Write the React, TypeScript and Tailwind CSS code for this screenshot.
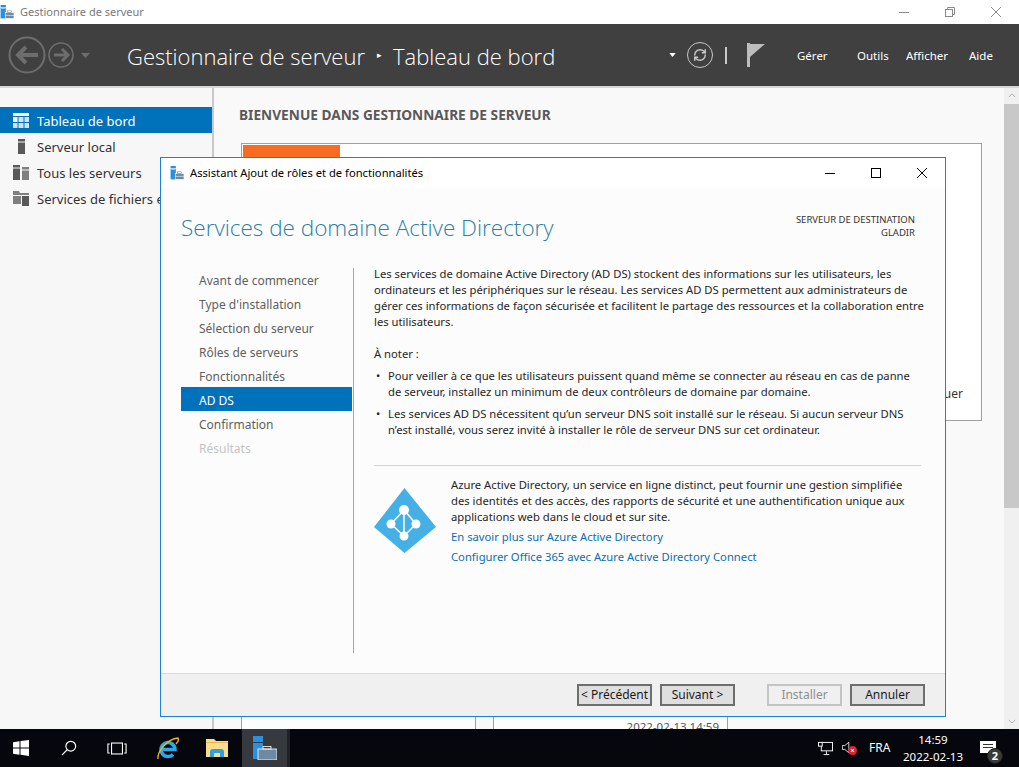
import React from 'react';
import { RefreshCw } from 'lucide-react';

const ServerIcon: React.FC<{ className?: string }> = ({ className }) => (
  <svg viewBox="0 0 24 24" className={className}>
    <rect x="1" y="0" width="9" height="4" fill="#2b8fe0" />
    <rect x="1" y="5" width="9" height="18" fill="#2b8fe0" />
    <rect x="2" y="5" width="7" height="1" fill="#ffffff" />
    <rect x="9" y="13" width="15" height="10" fill="#6e8aa3" stroke="#ffffff" strokeWidth="1" />
    <rect x="13" y="10" width="7" height="3" fill="none" stroke="#6e8aa3" strokeWidth="1" />
    <rect x="9" y="17" width="15" height="1" fill="#ffffff" />
  </svg>
);

const steps = [
  { label: 'Avant de commencer', state: 'normal' },
  { label: "Type d'installation", state: 'normal' },
  { label: 'Sélection du serveur', state: 'normal' },
  { label: 'Rôles de serveurs', state: 'normal' },
  { label: 'Fonctionnalités', state: 'normal' },
  { label: 'AD DS', state: 'active' },
  { label: 'Confirmation', state: 'normal' },
  { label: 'Résultats', state: 'disabled' },
];

const NavIcon: React.FC<{ kind: string; active?: boolean }> = ({ kind, active }) => {
  const c = active ? '#ffffff' : '#595959';
  if (kind === 'dash') {
    return (
      <svg viewBox="0 0 16 15" className="w-4 h-[15px] shrink-0">
        <rect width="16" height="3" fill={c} />
        <rect y="4" width="4.5" height="5" fill={c} />
        <rect x="5.5" y="4" width="5" height="5" fill="#cfe3f3" />
        <rect x="11.5" y="4" width="4.5" height="5" fill="#cfe3f3" />
        <rect y="10" width="4.5" height="5" fill="#cfe3f3" />
        <rect x="5.5" y="10" width="5" height="5" fill="#cfe3f3" />
        <rect x="11.5" y="10" width="4.5" height="5" fill="#cfe3f3" />
      </svg>
    );
  }
  if (kind === 'local') {
    return (
      <svg viewBox="0 0 16 15" className="w-4 h-[15px] shrink-0">
        <rect x="5" y="0" width="7" height="2.5" fill={c} />
        <rect x="5" y="3.5" width="7" height="11.500" fill={c} />
      </svg>
    );
  }
  if (kind === 'all') {
    return (
      <svg viewBox="0 0 16 15" className="w-4 h-[15px] shrink-0">
        <rect x="0" y="0" width="7" height="2.5" fill={c} />
        <rect x="0" y="3.5" width="7" height="11.500" fill={c} />
        <rect x="9" y="2" width="7" height="2.5" fill="#808080" />
        <rect x="9" y="5.5" width="7" height="9.500" fill="#808080" />
      </svg>
    );
  }
  return (
    <svg viewBox="0 0 16 15" className="w-4 h-[15px] shrink-0">
      <path d="M0 0h6l1 2h9v2H0z" fill="#808080" />
      <rect y="5" width="8" height="8" fill="#808080" />
      <rect x="9" y="5" width="7" height="10" fill={c} />
    </svg>
  );
};

const navItems = [
  { kind: 'dash', label: 'Tableau de bord', active: true },
  { kind: 'local', label: 'Serveur local' },
  { kind: 'all', label: 'Tous les serveurs' },
  { kind: 'files', label: 'Services de fichiers et' },
];

const CloseGlyph: React.FC<{ className?: string }> = ({ className }) => (
  <svg viewBox="0 0 10 10" className={`w-[10px] h-[10px] ${className ?? ''}`} fill="none" stroke="currentColor" strokeWidth="1">
    <path d="M0 0L10 10M10 0L0 10" />
  </svg>
);

const WizardButton: React.FC<{ label: string; disabled?: boolean; className?: string }> = ({ label, disabled, className }) => (
  <div
    className={`h-[22px] w-[75px] flex items-center justify-center text-[12px] border-2 ${
      disabled ? 'border-[#c4c4c4] bg-[#f0f0f0] text-[#8f8f8f]' : 'border-[#6e6e6e] bg-[#dfdfdf] text-[#1a1a1a]'
    } ${className ?? ''}`}
  >
    {label}
  </div>
);

const Wizard: React.FC = () => (
  <div className="absolute left-[160px] top-[157px] w-[786px] h-[560px] border border-[#1883d7] bg-[#fcfcfc] flex flex-col text-[#1f1f1f]">
    <div className="h-[30px] shrink-0 bg-white flex items-center pl-[9px]">
      <ServerIcon className="w-[14px] h-[14px]" />
      <span className="ml-[6px] text-[11.2px] text-black">Assistant Ajout de rôles et de fonctionnalités</span>
      <div className="ml-auto flex items-center text-black">
        <div className="w-[46px] flex justify-center"><div className="w-[10px] h-px bg-black" /></div>
        <div className="w-[46px] flex justify-center"><div className="w-[10px] h-[10px] border border-black" /></div>
        <div className="w-[46px] flex justify-center"><CloseGlyph /></div>
      </div>
    </div>

    <div className="h-[76px] shrink-0 flex pl-[20px] pr-[30px]">
      <h1 className="mt-[22px] text-[22.5px] leading-[36px] font-light text-[#2a7fa8] font-['Open_Sans',sans-serif]">Services de domaine Active Directory</h1>
      <div className="ml-auto mt-[25px] text-right text-[9.5px] leading-[13px] text-[#333333]">
        <div>SERVEUR DE DESTINATION</div>
        <div>GLADIR</div>
      </div>
    </div>

    <div className="flex-1 flex min-h-0">
      <div className="w-[171px] ml-[20px] mr-px mt-[3px] shrink-0 text-[12px]">
        {steps.map((s) => (
          <div
            key={s.label}
            className={`h-[24px] flex items-center pl-[18px] pt-[4px] ${
              s.state === 'active' ? 'bg-[#0072bc] text-white' : s.state === 'disabled' ? 'text-[#c4c4c4]' : 'text-[#5f5f5f]'
            }`}
          >
            {s.label}
          </div>
        ))}
      </div>

      <div className="mt-[4px] mb-[20px] border-l border-[#a6a6a6] pl-[20px] w-[574px] text-[11.25px] leading-[16px] text-[#262626]">
        <p className="mt-[-2px] whitespace-nowrap">
          Les services de domaine Active Directory (AD DS) stockent des informations sur les utilisateurs, les<br />
          ordinateurs et les périphériques sur le réseau. Les services AD DS permettent aux administrateurs de<br />
          gérer ces informations de façon sécurisée et facilitent le partage des ressources et la collaboration entre<br />
          les utilisateurs.
        </p>
        <p className="mt-[16px]">À noter :</p>
        <ul className="mt-[6px] space-y-[6px]">
          <li className="flex">
            <span className="w-[14px] pl-[2px] shrink-0">•</span>
            <span className="w-[530px]">Pour veiller à ce que les utilisateurs puissent quand même se connecter au réseau en cas de panne de serveur, installez un minimum de deux contrôleurs de domaine par domaine.</span>
          </li>
          <li className="flex">
            <span className="w-[14px] pl-[2px] shrink-0">•</span>
            <span className="w-[530px]">Les services AD DS nécessitent qu’un serveur DNS soit installé sur le réseau. Si aucun serveur DNS n’est installé, vous serez invité à installer le rôle de serveur DNS sur cet ordinateur.</span>
          </li>
        </ul>
        <div className="mt-[27px] w-[547px] border-t border-[#d4d4d4] pt-[11px] flex">
          <div className="w-[77px] shrink-0 pt-[11px]">
            <svg viewBox="0 0 62 65" className="w-[62px] h-[65px]">
              <path d="M30.500 0L62 39L30.500 65L0 39Z" fill="#45b0e6" />
              <path d="M30 22L17 36L30 48L42 36ZM30 22V48" fill="none" stroke="#ffffff" strokeWidth="1.500" />
              <circle cx="30" cy="22" r="5" fill="#ffffff" />
              <circle cx="17" cy="36" r="4.500" fill="#ffffff" />
              <circle cx="42" cy="36" r="4.500" fill="#ffffff" />
              <circle cx="30" cy="48" r="4.500" fill="#ffffff" />
            </svg>
          </div>
          <div className="flex-1">
            <p>
              Azure Active Directory, un service en ligne distinct, peut fournir une gestion simplifiée des identités et des accès, des rapports de sécurité et une authentification unique aux applications web dans le cloud et sur site.
            </p>
            <p className="mt-[4px] text-[#0a6fb0]">En savoir plus sur Azure Active Directory</p>
            <p className="mt-[4px] text-[#0a6fb0]">Configurer Office 365 avec Azure Active Directory Connect</p>
          </div>
        </div>
      </div>
    </div>

    <div className="h-[43px] shrink-0 bg-[#f0f0f0] border-t border-[#d9d9d9] flex items-center justify-end pr-[20px]">
      <WizardButton label="< Précédent" />
      <WizardButton label="Suivant >" className="ml-[8px]" />
      <WizardButton label="Installer" disabled className="ml-[32px]" />
      <WizardButton label="Annuler" className="ml-[8px]" />
    </div>
  </div>
);

export default function App() {
  return (
    <div className="relative w-[1019px] h-[767px] overflow-hidden flex flex-col bg-white font-['Noto_Sans',sans-serif]">
      <div className="h-[24px] shrink-0 bg-white flex items-center">
        <ServerIcon className="w-[14px] h-[14px] ml-0" />
        <span className="ml-[6px] pt-px text-[11px] text-[#7a7a7a]">Gestionnaire de serveur</span>
        <div className="ml-auto flex items-center text-[#8a8a8a]">
          <div className="w-[46px] flex justify-center"><div className="w-[10px] h-px bg-[#8a8a8a]" /></div>
          <div className="w-[46px] flex justify-center">
            <svg viewBox="0 0 10 10" className="w-[10px] h-[10px]" fill="none" stroke="currentColor"><rect x="0.5" y="2.5" width="7" height="7" /><path d="M2.500 2.500v-2h7v7h-2" /></svg>
          </div>
          <div className="w-[46px] flex justify-center"><CloseGlyph /></div>
        </div>
      </div>

      <div className="h-[62px] shrink-0 bg-[#404040] flex items-center text-white">
        <svg viewBox="0 0 82 40" className="w-[82px] h-[40px] ml-[8px] shrink-0" fill="none" stroke="#6d6d6d">
          <circle cx="19" cy="20" r="17.5" strokeWidth="2" />
          <path d="M30 20H10M18 12l-8 8 8 8" strokeWidth="4" />
          <circle cx="53" cy="20" r="12" strokeWidth="1.6" />
          <path d="M46 20h13M54 14l6 6-6 6" strokeWidth="3" />
          <path d="M73 18h9l-4.500 5z" fill="#6d6d6d" stroke="none" />
        </svg>
        <span className="ml-[37px] pt-[3px] text-[22px] font-light font-['Open_Sans',sans-serif]">Gestionnaire de serveur</span>
        <span className="ml-[12px] text-[9px]">▸</span>
        <span className="ml-[11px] pt-[3px] text-[22px] font-light font-['Open_Sans',sans-serif]">Tableau de bord</span>
        <div className="ml-auto flex items-center">
          <svg viewBox="0 0 8 5" className="w-[7px] h-[4px] mr-[11px]"><path d="M0 0h8L4 5z" fill="#ffffff" /></svg>
          <div className="w-[26px] h-[26px] rounded-full border-[1.5px] border-[#c8c8c8] flex items-center justify-center">
            <RefreshCw className="w-[14px] h-[14px] text-[#c8c8c8]" strokeWidth={2.5} />
          </div>
          <div className="ml-[12px] w-[2px] h-[17px] bg-[#c8c8c8]" />
          <svg viewBox="0 0 18 24" className="ml-[20px] w-[18px] h-[24px]">
            <rect x="0" y="0" width="3" height="24" fill="#bdbdbd" />
            <path d="M3 1H18L3 14Z" fill="#bdbdbd" />
          </svg>
          <div className="ml-[32px] w-[60px] text-[11.5px] pt-[2px]">Gérer</div>
          <div className="w-[49px] text-[11.5px] pt-[2px]">Outils</div>
          <div className="w-[63px] text-[11.5px] pt-[2px]">Afficher</div>
          <div className="w-[50px] text-[11.5px] pt-[2px]">Aide</div>
        </div>
      </div>

      <div className="flex-1 flex min-h-0 border-t-2 border-[#d6d6d6]">
        <div className="w-[214px] shrink-0 bg-[#f7f7f7] border-r-2 border-[#c8c8c8] pt-[19px] text-[13px] text-[#333333]">
          {navItems.map((n) => (
            <div key={n.label} className={`h-[26px] flex items-center pl-[13px] whitespace-nowrap ${n.active ? 'bg-[#0072bc] text-white' : ''}`}>
              <NavIcon kind={n.kind} active={n.active} />
              <span className="ml-[8px] pt-[4px]">{n.label}</span>
            </div>
          ))}
        </div>

        <div className="flex-1 bg-[#f9f9f9] flex min-w-0">
          <div className="flex-1 pl-[25px] pt-[17px] min-w-0">
            <h2 className="text-[13.7px] font-bold leading-[20px] text-[#595959] whitespace-nowrap">BIENVENUE DANS GESTIONNAIRE DE SERVEUR</h2>
            <div className="mt-[18px] ml-[2px] w-[741px] h-[278px] border border-[#a0a0a0] bg-white p-[1px] relative">
              <div className="w-[97px] h-[60px] bg-[#f76b23]" />
              <span className="absolute right-[18px] top-[241px] text-[12px] text-[#333333]">uer</span>
            </div>
            <div className="mt-[296px] ml-[2px] flex gap-[17px] h-[40px]">
              <div className="w-[235px] border-x border-[#a0a0a0] bg-[#fdfdfd]" />
              <div className="w-[235px] border-x border-[#a0a0a0] bg-[#fdfdfd] text-right pr-[8px] text-[11.5px] text-[#555555] pt-[1px]">2022-02-13 14:59</div>
            </div>
          </div>
          <div className="w-[15px] shrink-0 bg-[#f0f0f0] flex flex-col items-center text-[#a0a0a0]">
            <svg viewBox="0 0 10 6" className="w-[8px] h-[5px] mt-[5px]" fill="none" stroke="currentColor"><path d="M1 5l4-4 4 4" /></svg>
            <div className="mt-[6px] w-full h-[404px] bg-[#c8c8c8]" />
            <svg viewBox="0 0 10 6" className="w-[8px] h-[5px] mt-auto mb-[5px]" fill="none" stroke="currentColor"><path d="M1 1l4 4 4-4" /></svg>
          </div>
        </div>
      </div>

      <div className="h-[38px] shrink-0 bg-[#05070d] flex items-center text-white">
        <svg viewBox="0 0 16 16" className="ml-[13px] w-[16px] h-[16px]" fill="#ffffff">
          <path d="M0 2.300l6.500-1V7.500H0zM7.500 1.100L16 0v7.500H7.500zM0 8.500h6.500v6.200l-6.500-1zM7.500 8.500H16V16l-8.500-1.200z" />
        </svg>
        <svg viewBox="0 0 18 18" className="ml-[32px] w-[16px] h-[16px]" fill="none" stroke="#ffffff" strokeWidth="1.300">
          <circle cx="11" cy="7" r="5.500" />
          <path d="M7 11l-6 6" />
        </svg>
        <svg viewBox="0 0 22 14" className="ml-[30px] w-[20px] h-[13px]" fill="none" stroke="#ffffff" strokeWidth="1.200">
          <rect x="5" y="1" width="12" height="12" />
          <path d="M3 2H1v10h2M19 2h2v10h-2" />
        </svg>
        <svg viewBox="0 0 22 23" className="ml-[30px] w-[22px] h-[23px]">
          <path d="M5 12.500h13A7 7 0 1 0 16 17.500" fill="none" stroke="#2ea7e8" strokeWidth="3.500" />
          <path d="M1 22C0 15 10 2 21 1C22 3 21 5 19 7" fill="none" stroke="#f3b71b" strokeWidth="1.300" />
        </svg>
        <svg viewBox="0 0 22 18" className="ml-[27px] w-[22px] h-[18px]">
          <path d="M0 0h8l2 2h12v16H0z" fill="#f9dc8c" />
          <rect x="0" y="3" width="22" height="1" fill="#e5b94f" />
          <path d="M4 18v-5a3 3 0 0 1 3-3h8a3 3 0 0 1 3 3v5h-4v-4H8v4z" fill="#2f9fe0" />
        </svg>
        <div className="ml-[14px] w-[45px] h-full bg-[#36393d] flex items-center justify-center">
          <svg viewBox="0 0 24 24" className="w-[24px] h-[24px]">
            <rect x="0" y="0" width="10" height="6" fill="#2b8fe0" />
            <rect x="0" y="7" width="10" height="16" fill="#2b8fe0" />
            <rect x="5" y="13" width="19" height="11" fill="#6e8aa3" stroke="#ffffff" strokeWidth="0.800" />
            <rect x="10" y="10.500" width="8" height="2.500" fill="none" stroke="#ffffff" strokeWidth="0.800" />
          </svg>
        </div>
        <div className="w-[3px] h-full bg-[#1f2226]" />

        <div className="ml-auto flex items-center">
          <svg viewBox="0 0 16 16" className="w-[15px] h-[15px]" fill="none" stroke="#ffffff" strokeWidth="1">
            <rect x="3.500" y="1.500" width="12" height="9" />
            <path d="M9 11v3M6 14.500h6" />
            <rect x="0.500" y="1.500" width="4" height="4" fill="#05070d" />
          </svg>
          <div className="relative ml-[9px] w-[16px] h-[16px]">
            <svg viewBox="0 0 10 14" className="w-[8px] h-[13px] mt-[1px]" fill="none" stroke="#ffffff" strokeWidth="1">
              <path d="M0.500 4.500h3l5-4v13l-5-4h-3z" />
            </svg>
            <div className="absolute left-[6px] top-[6px] w-[9px] h-[9px] rounded-full bg-[#e02335] text-[7px] leading-[9px] text-center font-bold">×</div>
          </div>
          <span className="ml-[11px] text-[12px] w-[21px]">FRA</span>
          <div className="ml-[12px] w-[62px] text-center text-[11.5px] leading-[17px] whitespace-nowrap">
            <div>14:59</div>
            <div>2022-02-13</div>
          </div>
          <div className="relative ml-[16px] mr-[23px] w-[16px] h-[14px]">
            <div className="w-[16px] h-[12px] bg-white pt-[3px] pl-[3px]">
              <div className="w-[10px] h-px bg-[#333333]" />
              <div className="mt-[2px] w-[10px] h-px bg-[#333333]" />
            </div>
            <div className="absolute left-[7px] top-[7px] w-[16px] h-[16px] rounded-full bg-[#3a3a3a] border border-[#1a1a1a] text-[11px] leading-[14px] text-center font-bold">2</div>
          </div>
        </div>
      </div>

      <Wizard />
    </div>
  );
}
